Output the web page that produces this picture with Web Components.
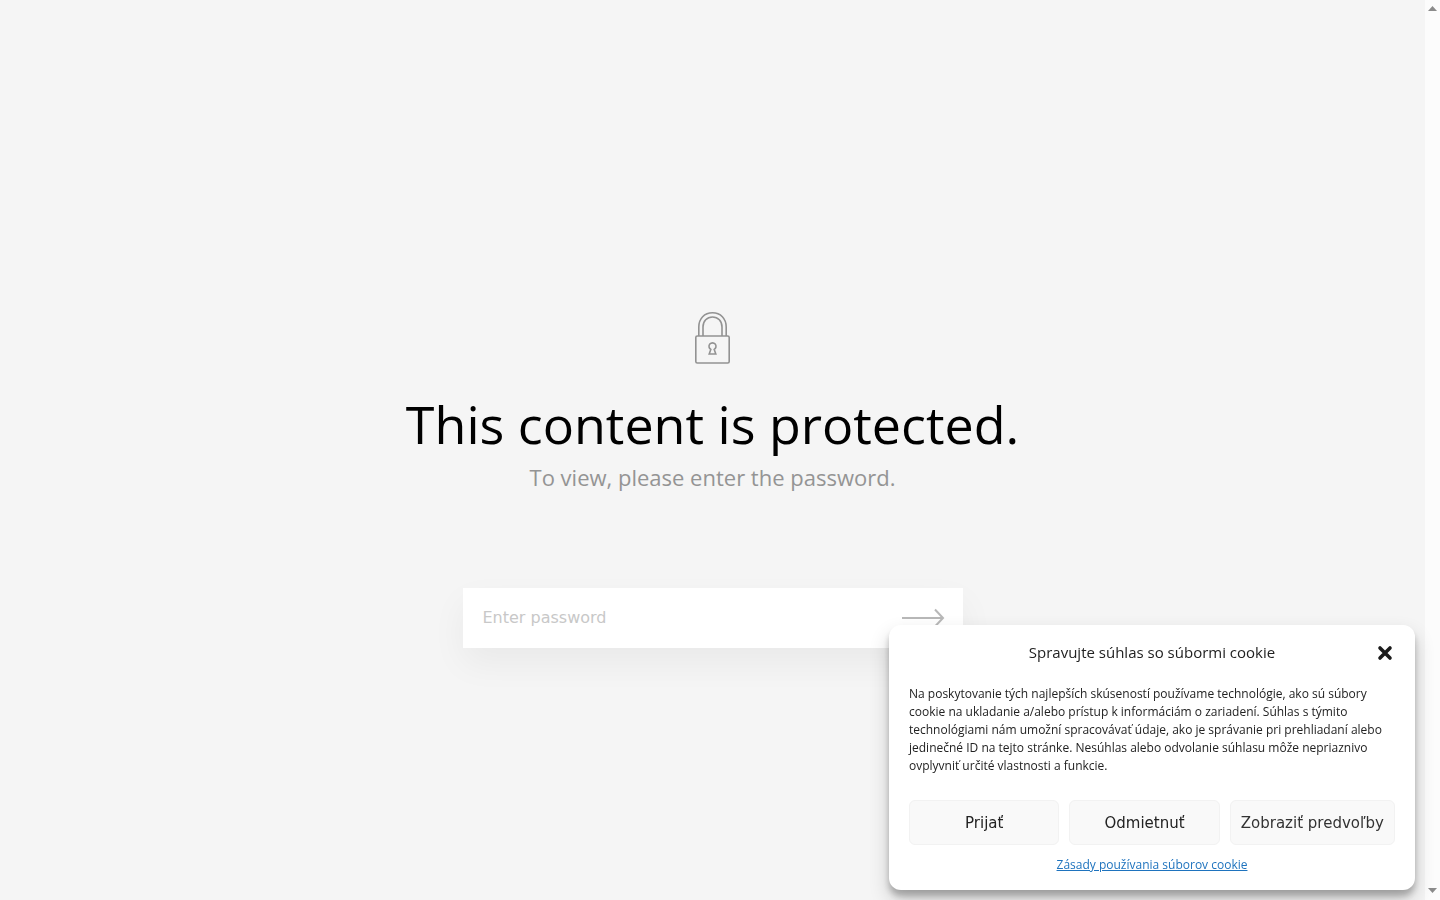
<!DOCTYPE html>
<html lang="sk">
<head>
<meta charset="utf-8">
<meta name="viewport" content="width=device-width, initial-scale=1">
<title>Protected content</title>
<style>
  html, body { height: 100%; margin: 0; }
  body { background: #f5f5f5; font-family: "Open Sans", sans-serif; overflow: hidden; }
</style>
</head>
<body>
<protected-page>
  <password-gate>
    <lock-icon slot="icon"></lock-icon>
    <span slot="title">This content is protected.</span>
    <span slot="subtitle">To view, please enter the password.</span>
    <password-form></password-form>
  </password-gate>
  <scroll-track slot="track"></scroll-track>
  <cookie-consent slot="overlay">
    <span slot="title">Spravujte súhlas so súbormi cookie</span>
    <span>Na poskytovanie tých najlepších skúseností používame technológie, ako sú súbory cookie na ukladanie a/alebo prístup k informáciám o zariadení. Súhlas s týmito technológiami nám umožní spracovávať údaje, ako je správanie pri prehliadaní alebo jedinečné ID na tejto stránke. Nesúhlas alebo odvolanie súhlasu môže nepriaznivo ovplyvniť určité vlastnosti a funkcie.</span>
    <consent-button slot="actions">Prijať</consent-button>
    <consent-button slot="actions">Odmietnuť</consent-button>
    <consent-button slot="actions" muted>Zobraziť predvoľby</consent-button>
  </cookie-consent>
</protected-page>
<script>
const define = (name, html) => customElements.define(name, class extends HTMLElement {
  constructor() {
    super();
    const template = document.createElement('template');
    template.innerHTML = html;
    this.attachShadow({ mode: 'open' }).append(template.content.cloneNode(true));
  }
});

define('protected-page', `
  <style>
    :host { display: flex; min-height: 100vh; }
    main { flex: 1; display: flex; align-items: center; justify-content: center; }
  </style>
  <main><slot></slot></main>
  <slot name="track"></slot>
  <slot name="overlay"></slot>`);

define('scroll-track', `
  <style>
    :host { display: flex; flex-direction: column; justify-content: space-between; align-items: center; width: 15px; background: #fcfcfc; }
    svg { display: block; width: 15px; height: 15px; fill: #8b8b8b; }
  </style>
  <svg viewBox="0 0 15 15" aria-hidden="true"><path d="M3 11 7.500 6 12 11Z"/></svg>
  <svg viewBox="0 0 15 15" aria-hidden="true"><path d="M3 3 7.500 8 12 3Z"/></svg>`);

define('lock-icon', `
  <style>
    :host { display: block; }
    svg { display: block; width: 35px; height: 54px; fill: none; stroke: #929292; stroke-width: 1.600; }
  </style>
  <svg viewBox="0 0 35 54" aria-hidden="true">
    <rect x="0.800" y="26" width="33.400" height="27" rx="1.500"/>
    <path d="M3.800 26V17C3.800 8.500 9.500 2.800 17.500 2.800S31.200 8.500 31.200 17V26"/>
    <path d="M8 26V17C8 11 12 7 17.500 7S27 11 27 17V26"/>
    <path d="M15.800 39.400A3.500 3.500 0 1 1 19.200 39.400L20.800 44H14.200Z"/>
  </svg>`);

define('password-gate', `
  <style>
    :host { display: flex; flex-direction: column; align-items: center; text-align: center; padding: 58px 20px 0; }
    h1 { margin: 24px 0 0; font-size: 52px; line-height: 72px; font-weight: 400; color: #000; }
    p { margin: 0 0 94px; font-size: 22px; line-height: 34px; color: #949494; }
  </style>
  <slot name="icon"></slot>
  <h1><slot name="title"></slot></h1>
  <p><slot name="subtitle"></slot></p>
  <slot></slot>`);

define('password-form', `
  <style>
    :host { display: block; width: 500px; max-width: 100%; }
    form { display: flex; height: 60px; background: #fff; box-shadow: 0 15px 35px rgba(0,0,0,.05); }
    input { flex: 1; min-width: 0; border: 0; padding: 0 20px 2px; background: none; outline: 0; font: 16px "DejaVu Sans", sans-serif; color: #222; }
    input::placeholder { color: #c8c8c8; opacity: 1; }
    button { border: 0; padding: 0 18px; background: none; }
    svg { display: block; width: 44px; height: 20px; fill: none; stroke: #b8b8b8; stroke-width: 2; }
  </style>
  <form>
    <input type="password" placeholder="Enter password" aria-label="Enter password">
    <button type="button" aria-label="Submit"><svg viewBox="0 0 44 20"><path d="M1 10H42M34 1.500 42 10 34 18.500"/></svg></button>
  </form>`);

define('consent-button', `
  <style>
    :host { display: flex; flex: 1 0 0; min-width: min-content; }
    button { flex: 1; height: 45px; box-sizing: border-box; padding: 0 10px; border: 1px solid #f2f2f2; border-radius: 6px; background: #f9f9f9; color: #222; font: 15px "DejaVu Sans", sans-serif; white-space: nowrap; }
    :host([muted]) button { color: #333; }
  </style>
  <button type="button"><slot></slot></button>`);

define('cookie-consent', `
  <style>
    :host { display: block; position: fixed; right: 25px; bottom: 10px; box-sizing: border-box; width: 526px; max-width: 100vw; padding: 15px 20px 16px; border-radius: 12px; background: #fff; color: #222; box-shadow: rgba(0,0,0,.19) 0 10px 20px, rgba(0,0,0,.23) 0 6px 6px; }
    header { display: grid; grid-template-columns: 20px 1fr 20px; grid-template-rows: 26px; align-items: center; }
    h2 { grid-column: 2; align-self: start; margin: 0; font-size: 15px; line-height: 24px; font-weight: 400; text-align: center; }
    header button { border: 0; padding: 0; background: none; }
    svg { display: block; width: 20px; height: 20px; stroke: #1c1c1c; stroke-width: 3.600; stroke-linecap: round; }
    p { margin: 19px 0 25px; font-size: 12px; line-height: 18px; }
    .actions { display: flex; gap: 10px; }
    footer { margin-top: 10px; text-align: center; font-size: 12px; line-height: 19px; }
    a { color: #1e73be; }
  </style>
  <header>
    <h2><slot name="title"></slot></h2>
    <button type="button" aria-label="Zavrieť"><svg viewBox="0 0 20 20"><path d="M5 5 15 15M15 5 5 15"/></svg></button>
  </header>
  <p><slot></slot></p>
  <div class="actions"><slot name="actions"></slot></div>
  <footer><a href="#cookies">Zásady používania súborov cookie</a></footer>`);
</script>
</body>
</html>
